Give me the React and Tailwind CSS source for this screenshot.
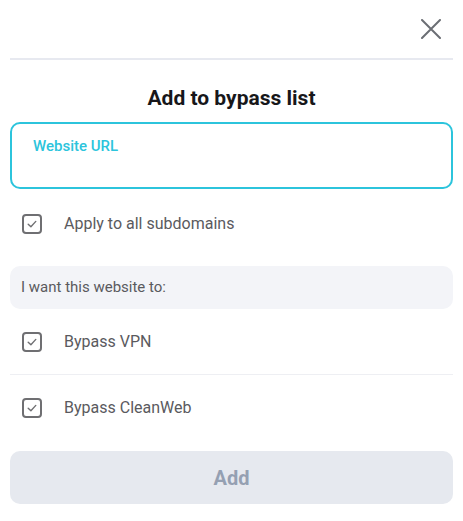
import React from 'react';

const Check = () => (
  <span className="flex h-5 w-5 shrink-0 items-center justify-center rounded-[4px] border-2 border-[#6f6f72]">
    <svg width="12" height="12" viewBox="0 0 12 12" fill="none">
      <path d="M2.2 6.2 L4.9 8.8 L9.8 3.4" stroke="#6f6f72" strokeWidth="1.4" strokeLinecap="round" strokeLinejoin="round" />
    </svg>
  </span>
);

const Row = ({ label }) => (
  <label className="flex items-center gap-[22px] pl-[12px]">
    <Check />
    <span className="text-[16px] text-[#5a5a5e]">{label}</span>
  </label>
);

const App = () => {
  return (
    <div className="h-[521px] w-[463px] bg-white px-[10px] font-['Roboto',sans-serif]">
      {/* Header */}
      <div className="flex h-[58px] items-center justify-end pr-[10px]">
        <button className="flex h-6 w-6 items-center justify-center">
          <svg width="20" height="20" viewBox="0 0 20 20" fill="none">
            <path d="M1 1 L19 19 M19 1 L1 19" stroke="#6b6e74" strokeWidth="2" strokeLinecap="round" />
          </svg>
        </button>
      </div>
      <div className="h-[2px] bg-[#e7e9f0]" />

      <h2 className="mt-[24px] text-center text-[21px] font-bold leading-[28px] text-[#17171a]">
        Add to bypass list
      </h2>

      {/* URL input */}
      <div className="mt-[10px] h-[67px] rounded-[10px] border-2 border-[#2cc4dc] pl-[21px] pt-[10px]">
        <span className="text-[15px] font-medium leading-[20px] text-[#2cc4dc]">Website URL</span>
      </div>

      <div className="mt-[23px]">
        <Row label="Apply to all subdomains" />
      </div>

      <div className="mt-[30px] flex h-[43px] items-center rounded-[10px] bg-[#f3f4f8] pl-[11px]">
        <span className="text-[15px] text-[#5a5a5e]">I want this website to:</span>
      </div>

      <div className="flex h-[66px] items-center border-b border-[#eeeff3]">
        <Row label="Bypass VPN" />
      </div>
      <div className="flex h-[66px] items-center">
        <Row label="Bypass CleanWeb" />
      </div>

      <button className="mt-[10px] flex h-[53px] w-full items-center justify-center rounded-[10px] bg-[#e6e9ef] text-[20px] font-bold text-[#95a0b2]">
        Add
      </button>
    </div>
  );
};

export default App;
